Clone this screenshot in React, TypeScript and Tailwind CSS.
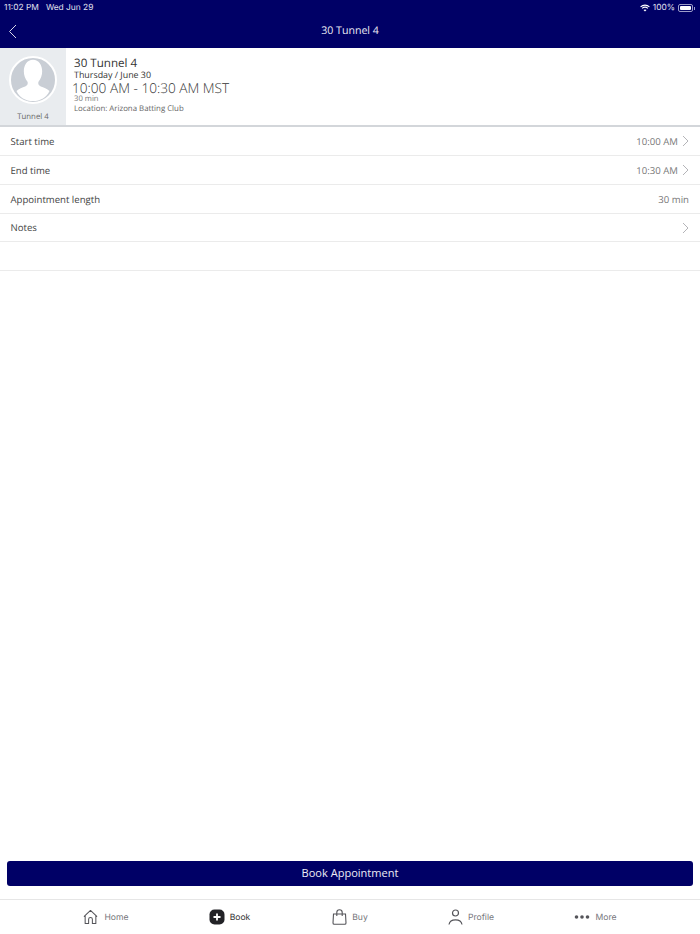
import React from "react";

const Chevron = () => (
  <svg width="7" height="12" viewBox="0 0 7 12" fill="none" className="shrink-0">
    <path d="M1 1l5 5-5 5" stroke="#b4b4b8" strokeWidth="1" />
  </svg>
);

function Row({ label, value, chevron, short }: { label: string; value?: string; chevron?: boolean; short?: boolean }) {
  return (
    <div className={`flex items-center justify-between border-b border-[#ebebeb] pl-[10.5px] pr-[11px] text-[9.6px] ${short ? "h-[28px]" : "h-[29px]"}`}>
      <span className="pt-[2px] text-[#444444]">{label}</span>
      <span className="flex items-center gap-[4px] text-[#777777]">
        {value && <span className="pt-[2px]">{value}</span>}
        {chevron && <Chevron />}
      </span>
    </div>
  );
}

function Tab({ icon, label, active, cell }: { icon: React.ReactNode; label: string; active?: boolean; cell: string }) {
  return (
    <div className={`flex items-center justify-center ${cell}`}>
      {icon}
      <span className={`pt-[2px] font-['Inter',sans-serif] text-[8.6px] ${active ? "text-[#333333]" : "text-[#77777c]"}`}>{label}</span>
    </div>
  );
}

export default function App() {
  return (
    <div className="flex h-[934px] w-[700px] flex-col overflow-hidden bg-white font-['Open_Sans',sans-serif] [text-rendering:geometricPrecision]">
      <header className="h-[48px] shrink-0 bg-[#000066] text-white">
        <div className="flex h-[14px] items-center justify-between pl-[4px] pr-[5px] pt-[2px] font-['Inter',sans-serif] text-[8.4px] text-[#e0e0ef]">
          <span className="flex gap-[7px]">
            <span>11:02 PM</span>
            <span>Wed Jun 29</span>
          </span>
          <span className="flex items-center gap-[3px]">
            <svg width="10" height="8" viewBox="0 0 10 8" fill="none">
              <path d="M0.6 2.8C3 0.6 7 0.6 9.4 2.8" stroke="#fff" strokeWidth="1.1" />
              <path d="M2.1 4.4C3.7 3 6.3 3 7.9 4.4" stroke="#fff" strokeWidth="1.1" />
              <path d="M5 7.6L3.5 6C4.3 5.3 5.7 5.3 6.5 6z" fill="#fff" />
            </svg>
            <span>100%</span>
            <span className="flex items-center">
              <span className="block h-[8px] w-[15px] rounded-[2px] border border-[#9c9cc8] p-[1px]">
                <span className="block h-full w-full rounded-[1px] bg-white" />
              </span>
              <span className="ml-[1px] block h-[3px] w-[1px] bg-[#9c9cc8]" />
            </span>
          </span>
        </div>
        <div className="relative flex h-[34px] items-center justify-center text-[10.6px] text-[#ececf5]">
          <svg width="9" height="15" viewBox="0 0 9 15" fill="none" className="absolute left-[8px] top-[10px]">
            <path d="M8 1L1.5 7.5L8 14" stroke="#d8d8e8" strokeWidth="1" />
          </svg>
          <span className="pt-[2px]">30 Tunnel 4</span>
        </div>
      </header>

      <section className="flex h-[79px] shrink-0 border-b-2 border-[#d3d6da]">
        <div className="flex w-[66px] shrink-0 flex-col items-center bg-[#e9ecef] pt-[8px]">
          <div className="h-[48px] w-[48px] overflow-hidden rounded-full border-2 border-white bg-[#c9ced5]">
            <svg viewBox="0 0 48 48" className="h-full w-full">
              <path
                d="M24 2C17.5 2 14 8 14 14.5C14 19 15.5 23 18 26C18.8 28 18 30 15.5 31.2C12.5 32.5 8.5 33.5 6 36C9 43 16 47 24 47C32 47 39 43 42 36C39.5 33.5 35.5 32.5 32.5 31.2C30 30 29.2 28 30 26C32.5 23 34 19 34 14.5C34 8 30.5 2 24 2z"
                fill="#fff"
              />
            </svg>
          </div>
          <span className="mt-[7px] text-[7.8px] leading-[12px] text-[#666666]">Tunnel 4</span>
        </div>
        <div className="flex flex-col pl-[8px] pt-[9px] text-[#333333]">
          <span className="text-[11.6px] leading-[13px]">30 Tunnel 4</span>
          <span className="text-[8.9px] leading-[9px]">Thursday / June 30</span>
          <span className="-ml-[2px] text-[13.65px] font-light leading-[17px]">10:00 AM - 10:30 AM MST</span>
          <span className="-mt-[1px] text-[7.7px] leading-[8px] text-[#777777]">30 min</span>
          <span className="text-[7.85px] leading-[12px] text-[#666666]">Location: Arizona Batting Club</span>
        </div>
      </section>

      <div className="flex-1">
        <Row label="Start time" value="10:00 AM" chevron />
        <Row label="End time" value="10:30 AM" chevron />
        <Row label="Appointment length" value="30 min" />
        <Row label="Notes" chevron short />
        <Row label="" />
      </div>

      <div className="shrink-0 px-[7px] pb-[13px]">
        <button className="flex h-[25px] w-full items-center justify-center rounded-[3px] bg-[#000066] text-[11.05px] text-[#ececf5]">
          Book Appointment
        </button>
      </div>

      <nav className="grid h-[35px] shrink-0 grid-cols-5 items-center border-t border-[#e6e6e6] px-[45px]">
        <Tab
          cell="gap-[6px]"
          label="Home"
          icon={
            <svg width="15" height="16" viewBox="0 0 16 16" fill="none">
              <path d="M1 7.5L8 1l7 6.5M2.3 6.5V15H6V10.5a2 2 0 0 1 4 0V15h3.700V6.5" stroke="#55555a" strokeWidth="1.1" strokeLinejoin="round" />
            </svg>
          }
        />
        <Tab
          active
          cell="gap-[5px] pl-[3px]"
          label="Book"
          icon={
            <svg width="16" height="16" viewBox="0 0 16 16">
              <rect x="0.5" y="0.5" width="15" height="15" rx="5" fill="#222226" />
              <path d="M8 4.5v7M4.5 8h7" stroke="#fff" strokeWidth="1.8" />
            </svg>
          }
        />
        <Tab
          cell="gap-[5px]"
          label="Buy"
          icon={
            <svg width="15" height="16" viewBox="0 0 15 16" fill="none">
              <path d="M1.5 5h12l.5 9a1.300 1.300 0 0 1-1.300 1.300H2.300A1.300 1.300 0 0 1 1 14z" stroke="#55555a" strokeWidth="1.1" />
              <path d="M4.800 7V3.500a2.700 2.700 0 0 1 5.400 0V7" stroke="#55555a" strokeWidth="1.1" />
            </svg>
          }
        />
        <Tab
          cell="gap-[5px] pr-[2px]"
          label="Profile"
          icon={
            <svg width="15" height="16" viewBox="0 0 15 16" fill="none">
              <circle cx="7.5" cy="4" r="3" stroke="#55555a" strokeWidth="1.2" />
              <path d="M1 15.5C1.5 12.5 4 10.8 7.5 10.8S13.5 12.5 14 15.5" stroke="#55555a" strokeWidth="1.2" />
            </svg>
          }
        />
        <Tab
          cell="gap-[5px] pl-[3px]"
          label="More"
          icon={
            <svg width="16" height="6" viewBox="0 0 16 6" fill="none">
              <circle cx="2.5" cy="3" r="1.8" fill="#55555a" />
              <circle cx="8" cy="3" r="1.8" fill="#55555a" />
              <circle cx="13.5" cy="3" r="1.8" fill="#55555a" />
            </svg>
          }
        />
      </nav>
    </div>
  );
}
